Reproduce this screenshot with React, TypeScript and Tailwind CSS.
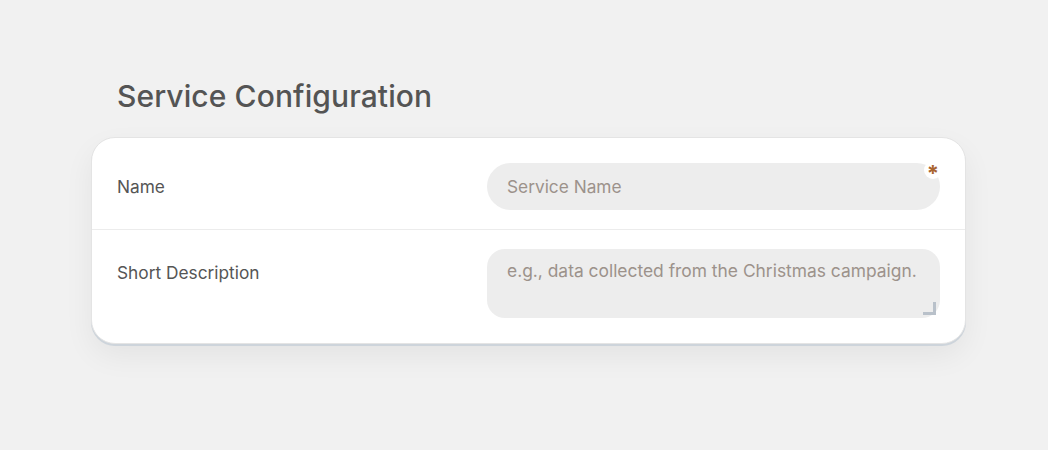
import React from 'react';

const App: React.FC = () => {
  return (
    <div className="min-h-[450px] w-full bg-[#f1f1f1] font-['Inter',sans-serif]">
      <div className="pl-[91px] pr-[82px] pt-[76px]">
        <h2 className="pl-[26px] text-[30px] leading-[40px] font-medium text-[#545454] tracking-[0.1px]">
          Service Configuration
        </h2>

        <div className="mt-[21px] rounded-[24px] border border-[#e4e4e4] bg-white shadow-[0_2px_0_#cdd4db,0_12px_30px_rgba(0,0,0,0.06)]">
          {/* Name row */}
          <div className="grid grid-cols-[370px_1fr] items-center px-[25px] pt-[25px] pb-[19px] border-b border-[#ececec]">
            <label className="text-[17.3px] text-[#555]">Name</label>
            <div className="relative">
              <input
                type="text"
                placeholder="Service Name"
                className="h-[47px] w-full rounded-full bg-[#ededed] px-5 text-[17.3px] text-[#4d4d4d] outline-none placeholder:text-[#9c928b]"
              />
              <span className="absolute -right-[2px] -top-[2px] h-[18px] w-[18px] rounded-full bg-white" />
              <span className="absolute -right-[2px] -top-[1px] w-[18px] text-center text-[22px] leading-[22px] font-bold text-[#a9652f]">
                *
              </span>
            </div>
          </div>

          {/* Short description row */}
          <div className="grid grid-cols-[370px_1fr] items-start px-[25px] pt-[19px] pb-[25px]">
            <label className="pt-[11px] text-[17.3px] text-[#555]">Short Description</label>
            <div className="relative">
              <textarea
                placeholder="e.g., data collected from the Christmas campaign."
                className="block h-[69px] w-full resize-none rounded-[18px] bg-[#ededed] px-5 pt-[10px] text-[17.4px] leading-[24px] text-[#4d4d4d] outline-none placeholder:text-[#9c928b]"
              />
              <span className="pointer-events-none absolute bottom-[3px] right-[4px] h-[13px] w-[13px] border-b-[3px] border-r-[3px] border-[#b9c1ca]" />
            </div>
          </div>
        </div>
      </div>
    </div>
  );
};

export default App;
